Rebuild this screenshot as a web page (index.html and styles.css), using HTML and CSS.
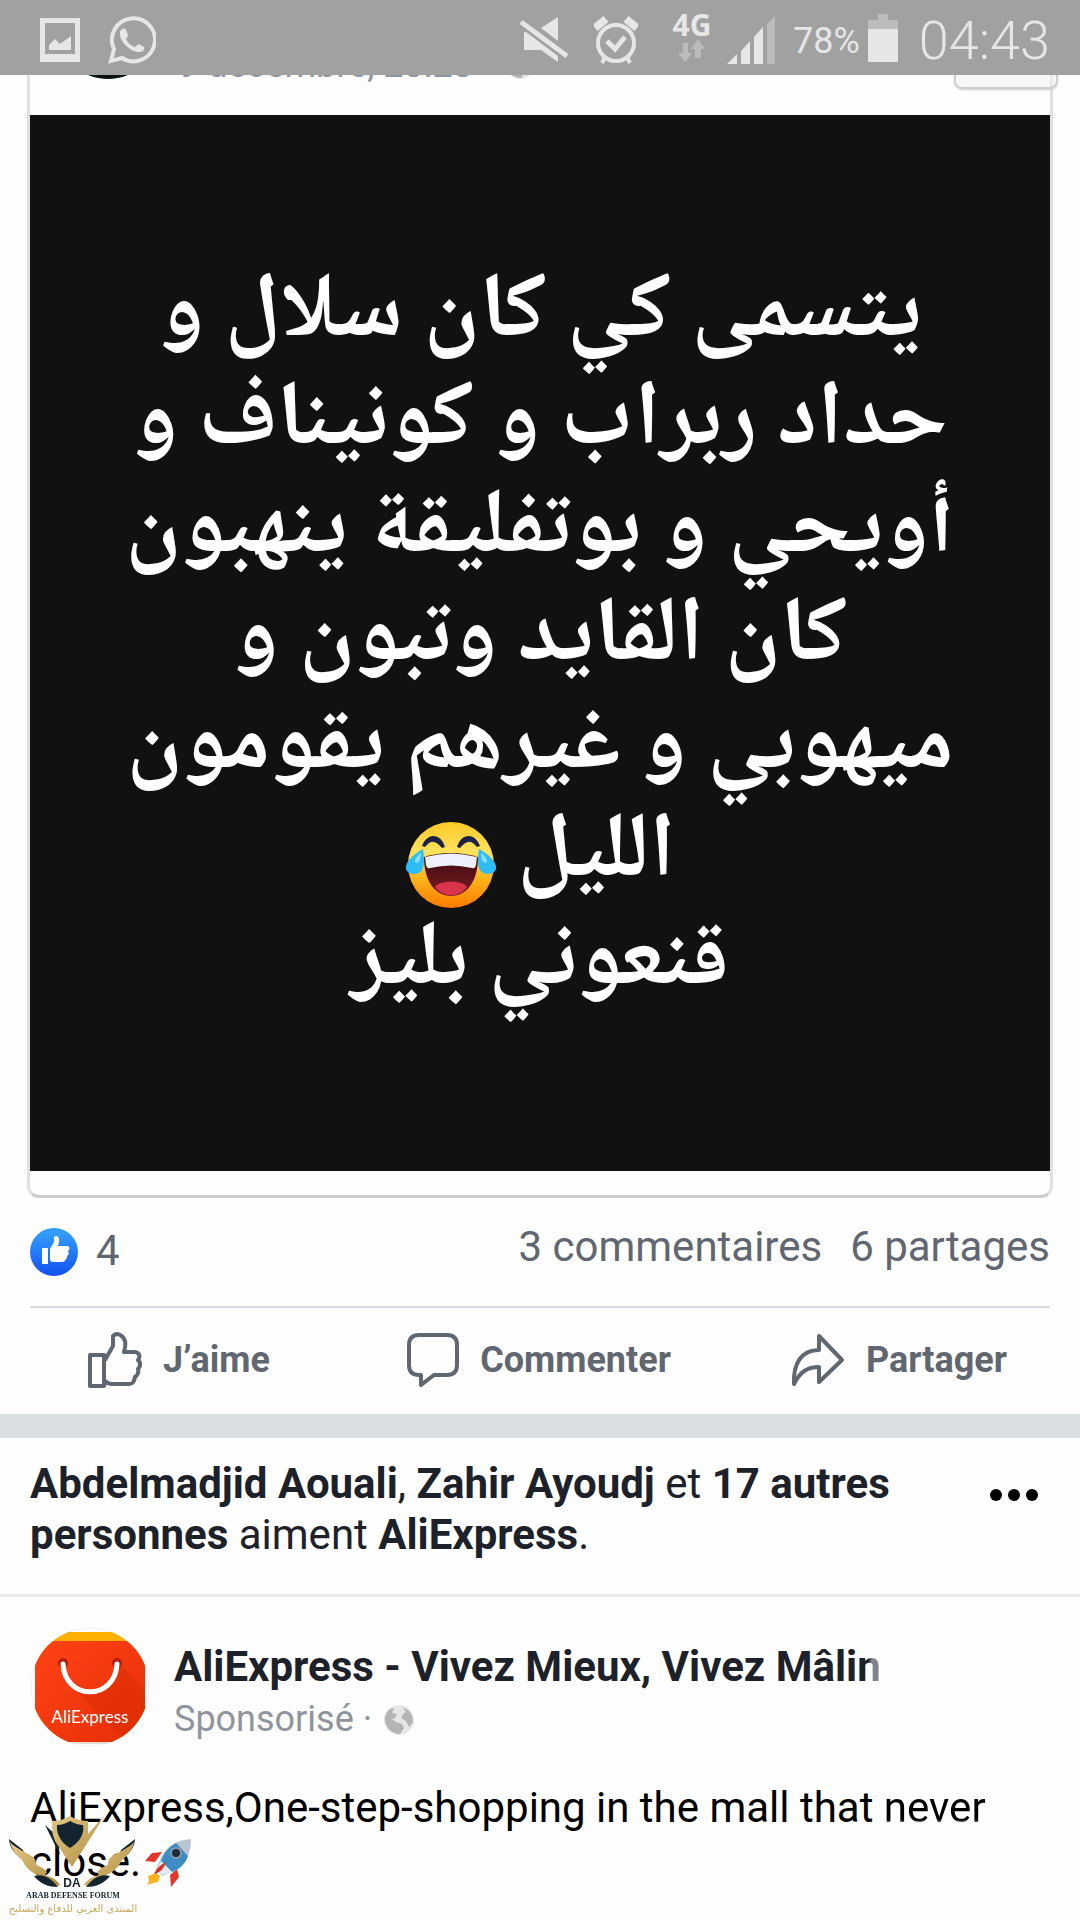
FILE: index.html
```html
<!DOCTYPE html>
<html lang="fr">
<head>
  <meta charset="UTF-8">
  <meta name="viewport" content="width=device-width, initial-scale=1.0">
  <title>Fil d'actualité</title>
  <link rel="stylesheet" href="styles.css">
</head>
<body>
  <header class="status">
    <svg width="40" height="44" viewBox="0 0 40 44"><path fill="#e6e6e6" fill-rule="evenodd" d="M0 0h40v44H0zM5 5v31h30V5zM9 32v-5l6-6 5 5 11-8v14z"/></svg>
    <svg class="wa" width="48" height="48" viewBox="0 0 48 48"><path fill="none" stroke="#e6e6e6" stroke-width="4" d="M3 45l3-12a21.500 21.500 0 1 1 8 9z"/><path fill="#e6e6e6" d="M13 14c2-2 4-2 5 0l2 5c0 2-2 3-2 4 2 4 5 7 9 8 1 0 3-3 4-3l5 3c1 2-1 5-4 5-9 1-21-11-20-19 0-1 0-2 1-3z"/></svg>

    <div class="right">
      <svg class="mute" width="48" height="48" viewBox="0 0 48 48"><path fill="#e6e6e6" d="M4 16v18h17l17 12V37L7 16zM38 1v24L21 12z"/><path stroke="#a1a1a1" stroke-width="11" d="M2 6l44 33"/><path stroke="#e6e6e6" stroke-width="5" d="M1 6l46 34"/></svg>
      <svg class="alarm" width="44" height="48" viewBox="0 0 44 48"><g fill="none" stroke="#e6e6e6"><circle cx="22" cy="27" r="18" stroke-width="4"/><path stroke-width="5" d="M13 25l8 8 10-12"/><path stroke-width="8" d="M1 12L12 3M43 12L32 3"/><path stroke-width="4" d="M11 41l-3 6M33 41l3 6"/></g></svg>
      <div class="net">
        <span>4G</span>
        <svg width="28" height="24" viewBox="0 0 28 24"><path fill="#bcbcbc" d="M5 4h5v10h4L7 23 0 14h5zM17 19V10h-4l7-10 7 10h-4v9z"/></svg>
      </div>
      <svg class="signal" width="48" height="48" viewBox="0 0 48 48"><path fill="#e6e6e6" d="M0 48l10-10v10zM14 35l9-10v23h-9zM27 21l9-10v37h-9z"/><path fill="#bcbcbc" d="M40 8l8-8v48h-8z"/></svg>
      <span class="percent">78%</span>
      <svg class="battery" width="30" height="48" viewBox="0 0 30 48"><path fill="#bcbcbc" d="M10 0h10v6h10v9H0V6h10z"/><path fill="#e6e6e6" d="M0 15h30v33H0z"/></svg>
      <span class="clock">04:43</span>
    </div>
  </header>

  <main>
    <article class="post">
      <div class="card">
        <div class="cardHead">
          <div class="pic"></div>
          <span class="date">9 décembre, 20:28</span>
          <svg class="globe" width="30" height="30" viewBox="0 0 30 30"><circle cx="15" cy="15" r="15" fill="#e6e6e6"/><path fill="#b4b4b4" d="M1 12C3 5 7 3 10 3L8 8l5 1-2 4-3 1 4 3 6 2 2 4-4 6C7 29 0 21 1 12zM19 3c6 1 10 7 10 14l-4 5-3-6-5-3 2-4 3-2z"/></svg>
          <button class="more" aria-label="Options"></button>
        </div>
        <div class="quote" lang="ar" dir="rtl">
          <p>يتسمى كي كان سلال و<br>حداد ربراب و كونيناف و<br>أويحي و بوتفليقة ينهبون<br>كان القايد وتبون و<br>ميهوبي و غيرهم يقومون<br>الليل <svg class="joy" width="92" height="86" viewBox="0 0 92 86">
            <defs>
              <linearGradient id="face" x1="0" y1="0" x2="0" y2="1"><stop offset="0" stop-color="#ffc928"/><stop offset=".35" stop-color="#ffe25e"/><stop offset=".65" stop-color="#fdb61c"/><stop offset="1" stop-color="#ff7a00"/></linearGradient>
              <linearGradient id="mouth" x1="0" y1="0" x2="0" y2="1"><stop offset="0" stop-color="#3a0a10"/><stop offset="1" stop-color="#7c1a22"/></linearGradient>
            </defs>
            <circle cx="46" cy="43" r="43" fill="url(#face)"/>
            <path fill="#1d2144" d="M17 24c5-14 19-13 23 1l-3 1c-7-8-11-8-17-1zM52 25c4-14 18-15 23-1l-3 1c-6-7-10-7-17 1z"/>
            <path fill="url(#mouth)" d="M19 35q27-8 54 0c0 24-11 39-27 39S19 59 19 35z"/>
            <path fill="#eef0fb" d="M20 35q26-7 52 0l-1 8q-1 4-4 3-21-5-42 0-3 1-4-3z"/>
            <path fill="#d9344a" d="M30 65c4-7 28-7 32 0-8 11-24 11-32 0z"/>
            <path fill="#2dbcf6" d="M18 27c2 14 2 25-9 25-12-1-12-13 9-25zM74 27c-2 14-2 25 9 25 12-1 12-13-9-25z"/>
            <path fill="#8adcfb" d="M16 31c0 6-1 9-4 10-4 0-2-6 4-10zM76 31c0 6 1 9 4 10 4 0 2-6-4-10z"/>
          </svg><br>قنعوني بليز</p>
        </div>
      </div>

      <div class="stats">
        <svg width="48" height="48" viewBox="0 0 48 48"><defs><linearGradient id="blue" x1="0" y1="0" x2="0" y2="1"><stop offset=".1" stop-color="#329dfb"/><stop offset="1" stop-color="#1250ef"/></linearGradient></defs><circle cx="24" cy="24" r="24" fill="url(#blue)"/><path fill="#fff" d="M12 20h6v16h-6zM20 21l4-7V9c3-3 6 1 5 5l-1 4h9c3 0 3 4 1 5 1 2 1 4-1 5 0 2 0 3-2 4 0 1-1 2-3 2H23c-2 0-3-1-3-3z"/></svg>
        <span class="likes">4</span>
        <a href="#">3 commentaires</a>
        <a href="#">6 partages</a>
      </div>

      <div class="actions">
        <button>
          <svg width="54" height="56" viewBox="0 0 54 56"><g fill="none" stroke="#616770" stroke-width="4" stroke-linejoin="round" stroke-linecap="round"><path d="M2 23h14v31H2zM17 28l8-14V4c4-4 10-1 12 5 1 4 0 7-1 11h10c5 0 7 4 4 8 3 3 3 6 0 9 1 4 0 6-3 8-1 5-2 7-6 7H24c-4 0-5-2-7-3"/></g></svg>
          <span>J’aime</span>
        </button>
        <button>
          <svg width="52" height="54" viewBox="0 0 52 54"><path fill="none" stroke="#616770" stroke-width="4" stroke-linejoin="round" d="M12 2h28q10 0 10 10v20q0 10-10 10H27L14 52V42h-2Q2 42 2 32V12Q2 2 12 2z"/></svg>
          <span>Commenter</span>
        </button>
        <button>
          <svg width="54" height="54" viewBox="0 0 54 54"><path fill="none" stroke="#616770" stroke-width="4" stroke-linejoin="round" d="M28 3l23 24-23 22V34C16 34 9 39 3 51 2 31 10 17 28 17z"/></svg>
          <span>Partager</span>
        </button>
      </div>
    </article>

    <article class="ad">
      <div class="social">
        <p><b>Abdelmadjid Aouali</b>, <b>Zahir Ayoudj</b> et <b>17 autres personnes</b> aiment <b>AliExpress</b>.</p>
        <button class="dots" aria-label="Plus"><i></i><i></i><i></i></button>
      </div>

      <div class="brand">
        <svg width="120" height="120" viewBox="0 0 120 120">
          <defs>
            <clipPath id="round"><circle cx="60" cy="60" r="59"/></clipPath>
            <linearGradient id="red" x1="0" y1="0" x2="1" y2="1"><stop offset="0" stop-color="#ff4317"/><stop offset="1" stop-color="#e62e04"/></linearGradient>
          </defs>
          <circle cx="60" cy="60" r="59" fill="#fff" stroke="#f0f0f0"/>
          <g clip-path="url(#round)">
            <path fill="#e2dcd2" d="M10 113h100v4H10z"/>
            <rect x="5" y="5" width="110" height="110" rx="5" fill="#ffb000"/>
            <rect x="5" y="14" width="110" height="101" rx="3" fill="url(#red)"/>
            <path fill="#d92b04" opacity=".5" d="M90 37l25 27v51H96L47 64c24 4 39-6 43-27z"/>
          </g>
          <circle cx="33" cy="36" r="5" fill="#b41f08"/><circle cx="87" cy="36" r="5" fill="#b41f08"/>
          <path fill="none" stroke="#fff" stroke-width="5" stroke-linecap="round" d="M33 37c2 37 52 37 54 0"/>
          <text class="logoText" x="60" y="96" text-anchor="middle">AliExpress</text>
        </svg>
        <div class="who">
          <a class="name" href="#">AliExpress - Vivez Mieux, Vivez Mâli<span>n</span></a>
          <div class="sponsor">Sponsorisé · <svg width="30" height="30" viewBox="0 0 30 30"><circle cx="15" cy="15" r="15" fill="#e6e6e6"/><path fill="#b4b4b4" d="M1 12C3 5 7 3 10 3L8 8l5 1-2 4-3 1 4 3 6 2 2 4-4 6C7 29 0 21 1 12zM19 3c6 1 10 7 10 14l-4 5-3-6-5-3 2-4 3-2z"/></svg></div>
        </div>
      </div>

      <p class="text">AliExpress,One-step-shopping in the mall that <span>never</span> close.<svg class="rocket" width="46" height="48" viewBox="0 0 46 48">
        <path fill="#e3372c" d="M17 13L7 14 0 22l10 1zM32 30l2 8-8 10-1-12z"/>
        <path fill="#ffb21f" d="M11 34l-8 3 1 5-2 4 6-2 5-1 2-6z"/>
        <path fill="#b8c4d0" d="M46 0C31 1 21 8 16 19l-5 11 6 7 12-5C40 26 46 15 46 0z"/>
        <path fill="#3d8dc4" d="M31 4C22 9 18 16 16 22l11 11c8-3 14-9 16-16z"/>
        <path fill="#e2e9ef" d="M16 22c-2 4-4 8-4 9l5 5 10-3z"/>
        <circle cx="31" cy="14" r="5" fill="#1e2b3b" stroke="#8b98a5" stroke-width="2"/>
        <path fill="#d92d24" d="M21 23c-6 3-10 7-12 12 6-1 10-6 12-12z"/>
      </svg></p>
    </article>
  </main>

  <svg class="watermark" width="130" height="106" viewBox="0 0 130 106">
    <defs><linearGradient id="gold" x1="0" y1="0" x2="1" y2="1"><stop offset="0" stop-color="#e3c988"/><stop offset="1" stop-color="#b08a3c"/></linearGradient></defs>
    <path fill="#14242e" d="M36 11l11 10 4 20zM0 25l14 11 3 9C7 42 1 36 0 25zM126 25l-14 11-3 9c10-3 16-9 17-20z"/>
    <path fill="url(#gold)" d="M1 28c7 8 18 10 25 17l2 8C13 48 4 41 1 28zM12 43c8 7 19 7 26 15l-3 5c-11-3-19-8-23-20zM28 58c8 4 18 4 23 13-9 3-20-1-23-13z"/>
    <path fill="url(#gold)" d="M125 28c-7 8-18 10-25 17l-2 8c15-5 24-12 27-25zM114 43c-8 7-19 7-26 15l3 5c11-3 19-8 23-20zM98 58c-8 4-18 4-23 13 9 3 20-1 23-13z"/>
    <path fill="#14242e" d="M25 62c10-3 18 3 24 11-9 0-18-3-24-11zM101 62c-10-3-18 3-24 11 9 0 18-3 24-11z"/>
    <path fill="url(#gold)" d="M43 7q10 0 18-5 8 5 18 5v13L96 1 63 53 46 27q-4-9-3-20z"/>
    <path fill="#14242e" d="M48 11q7 0 13-4 7 4 13 4c2 10-5 18-13 23-8-5-14-13-13-23z"/>
    <text class="wmDa" x="63" y="73" text-anchor="middle">DA</text>
    <text class="wmName" x="64" y="84" text-anchor="middle">ARAB DEFENSE FORUM</text>
    <text class="wmArabic" x="64" y="98" text-anchor="middle">المنتدى العربي للدفاع والتسليح</text>
  </svg>
</body>
</html>
```
FILE: styles.css
```css
* {
  margin: 0;
  padding: 0;
  box-sizing: border-box;
}

body {
  background: #fefefe;
  color: #1d2129;
  font-family: Roboto, "Liberation Sans", sans-serif;
  font-size: 42px;
  overflow: hidden;
}

a {
  color: inherit;
  text-decoration: none;
}

button {
  background: none;
  border: 0;
  font-family: inherit;
}

svg {
  flex: none;
}

/* status bar, stays over the feed */
.status {
  position: fixed;
  top: 0;
  left: 0;
  right: 0;
  z-index: 5;
  height: 75px;
  padding: 4px 30px 0 40px;
  display: flex;
  align-items: center;
  gap: 28px;
  background: #a1a1a1;
  color: #e6e6e6;
}

.right {
  margin-left: auto;
  display: flex;
  align-items: center;
}

.alarm {
  margin-left: 26px;
}

.net {
  width: 44px;
  margin-left: 32px;
  padding-bottom: 6px;
  display: flex;
  flex-direction: column;
  align-items: center;
}

.net span {
  font-family: "Noto Sans", sans-serif;
  font-size: 30px;
  font-weight: bold;
  line-height: 28px;
}

.signal {
  margin-left: 13px;
}

.percent {
  margin-left: 18px;
  padding-top: 2px;
  font-size: 36px;
}

.battery {
  margin: 0 21px 4px 8px;
}

.clock {
  padding-top: 2px;
  font-size: 54px;
  font-weight: 300;
}

/* shared post */
.card {
  margin: 0 27px;
  padding-bottom: 24px;
  border: 3px solid #e1e1e1;
  border-top: 0;
  border-bottom-color: #cdcdcd;
  border-radius: 0 0 12px 12px;
}

.cardHead {
  height: 115px;
  padding: 0 0 36px 28px;
  display: flex;
  align-items: flex-end;
}

.pic {
  width: 100px;
  height: 100px;
  border-radius: 50%;
  background: #07120c;
}

.date {
  margin-left: 20px;
  color: #90949c;
  font-size: 36px;
  line-height: 28px;
}

.globe {
  margin-left: 32px;
}

.more {
  width: 104px;
  height: 60px;
  margin: 0 -8px -10px auto;
  border: 2px solid #cfcfcf;
  border-radius: 8px;
  background: rgba(240, 240, 240, 0.5);
  box-shadow: 0 1px 2px #ccc;
}

.quote {
  padding: 144px 0 156px;
  background: #111;
  color: #fff;
  text-align: center;
  font-family: "Noto Naskh Arabic UI", "Noto Naskh Arabic", "DejaVu Sans", sans-serif;
  font-size: 92px;
  font-weight: bold;
  line-height: 108px;
  white-space: nowrap;
}

.joy {
  margin: -20px 0;
  vertical-align: 0;
}

.stats {
  height: 110px;
  margin: 0 30px;
  border-bottom: 2px solid #d8dadd;
  display: flex;
  align-items: center;
  color: #616770;
}

.likes {
  margin: 0 auto 0 18px;
  padding-bottom: 4px;
}

.stats a {
  margin-left: 28px;
  padding-bottom: 12px;
}

.actions {
  height: 106px;
  display: flex;
}

.actions button {
  flex: 1;
  display: flex;
  align-items: center;
  justify-content: center;
  gap: 21px;
  padding: 0 2px 2px 0;
  color: #616770;
  font-size: 36px;
  font-weight: bold;
}

/* sponsored post */
.ad {
  border-top: 24px solid #dadde1;
}

.social {
  padding: 20px 42px 34px 30px;
  border-bottom: 3px solid #ededed;
  display: flex;
  align-items: flex-start;
  justify-content: space-between;
}

.social p {
  max-width: 900px;
  line-height: 51px;
}

.dots {
  display: flex;
  gap: 6px;
  padding-top: 31px;
}

.dots i {
  width: 12px;
  height: 12px;
  border-radius: 50%;
  background: #000;
}

.brand {
  padding: 30px 30px 0;
  display: flex;
  align-items: center;
  gap: 24px;
}

.who {
  padding-top: 11px;
}

.name {
  display: block;
  font-weight: bold;
  line-height: 52px;
}

.name span {
  background: linear-gradient(100deg, #1d2129 45%, #808389 55%);
  background-clip: text;
  color: transparent;
}

.sponsor {
  color: #90949c;
  font-size: 36px;
  line-height: 52px;
}

.sponsor svg {
  margin-left: 3px;
  vertical-align: -4px;
}

.logoText {
  fill: #fff;
  font-family: Lato, sans-serif;
  font-size: 17px;
}

.text {
  padding: 34px 30px 0;
  color: #000;
  line-height: 54px;
}

.text span {
  background: linear-gradient(#000 75%, #777 80%);
  background-clip: text;
  color: transparent;
}

.rocket {
  margin-left: 4px;
  vertical-align: -11px;
}

.watermark {
  position: fixed;
  left: 9px;
  bottom: 0;
}

.wmDa {
  fill: #14242e;
  font-family: "Liberation Sans", sans-serif;
  font-size: 12px;
  font-weight: bold;
}

.wmName {
  fill: #14242e;
  font-family: "Liberation Serif", serif;
  font-size: 8px;
  font-weight: bold;
}

.wmArabic {
  fill: #c9a55a;
  font-family: "DejaVu Sans", sans-serif;
  font-size: 10px;
}
```
